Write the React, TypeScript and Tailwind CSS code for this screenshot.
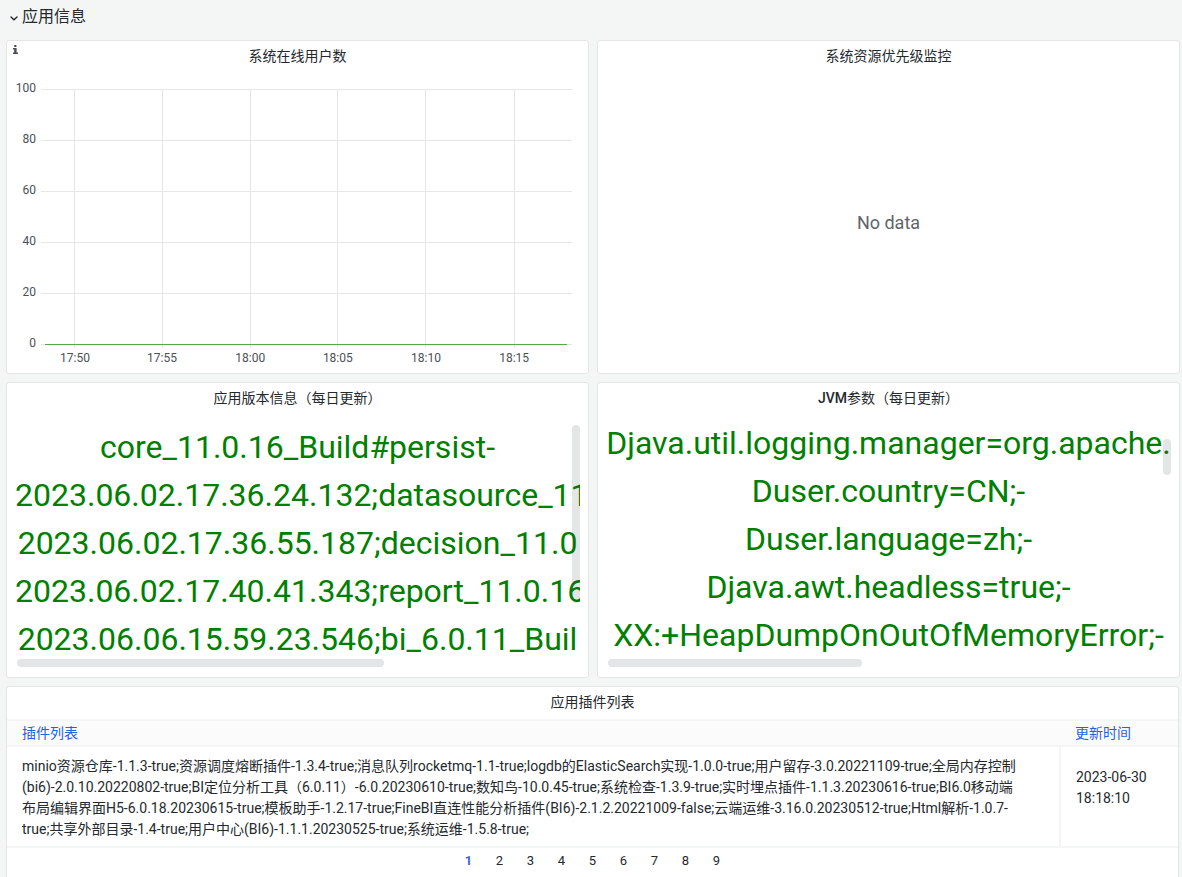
import type { ReactNode } from "react";
import { clsx } from "clsx";

const yTicks = [100, 80, 60, 40, 20, 0];

const xTicks = [
  { label: "17:50", x: "6.4%" },
  { label: "17:55", x: "22.8%" },
  { label: "18:00", x: "39.4%" },
  { label: "18:05", x: "55.9%" },
  { label: "18:10", x: "72.5%" },
  { label: "18:15", x: "89.1%" },
];

const versionLines = [
  "core_11.0.16_Build#persist-",
  "2023.06.02.17.36.24.132;datasource_11",
  "2023.06.02.17.36.55.187;decision_11.0",
  "2023.06.02.17.40.41.343;report_11.0.16",
  "2023.06.06.15.59.23.546;bi_6.0.11_Buil",
];

const jvmLines = [
  "Djava.util.logging.manager=org.apache.",
  "Duser.country=CN;-",
  "Duser.language=zh;-",
  "Djava.awt.headless=true;-",
  "XX:+HeapDumpOnOutOfMemoryError;-",
];

const pluginLines = [
  "minio资源仓库-1.1.3-true;资源调度熔断插件-1.3.4-true;消息队列rocketmq-1.1-true;logdb的ElasticSearch实现-1.0.0-true;用户留存-3.0.20221109-true;全局内存控制",
  "(bi6)-2.0.10.20220802-true;BI定位分析工具（6.0.11）-6.0.20230610-true;数知鸟-10.0.45-true;系统检查-1.3.9-true;实时埋点插件-1.1.3.20230616-true;BI6.0移动端",
  "布局编辑界面H5-6.0.18.20230615-true;模板助手-1.2.17-true;FineBI直连性能分析插件(BI6)-2.1.2.20221009-false;云端运维-3.16.0.20230512-true;Html解析-1.0.7-",
  "true;共享外部目录-1.4-true;用户中心(BI6)-1.1.1.20230525-true;系统运维-1.5.8-true;",
];

const pages = [1, 2, 3, 4, 5, 6, 7, 8, 9];

function Panel({
  title,
  className,
  children,
}: {
  title: ReactNode;
  className?: string;
  children: ReactNode;
}) {
  return (
    <section
      className={clsx(
        "relative flex min-w-0 flex-col rounded-[3px] border border-[#e4e6e6] bg-white",
        className,
      )}
    >
      <h2 className="h-8 shrink-0 text-center text-sm leading-[30px]">
        {title}
      </h2>
      {children}
    </section>
  );
}

function OnlineUsersChart() {
  return (
    <div className="flex-1 pt-4 pr-4 pl-[34px]">
      <svg
        className="h-[284px] w-full overflow-visible text-xs"
        fill="#4b5056"
        role="img"
        aria-label="系统在线用户数"
      >
        <g stroke="#e6e6e7" strokeWidth="1" shapeRendering="crispEdges">
          {yTicks.map((tick, i) => (
            <line key={tick} x1="0" x2="100%" y1={i * 51 + 0.5} y2={i * 51 + 0.5} />
          ))}
          {xTicks.map((tick) => (
            <line key={tick.label} x1={tick.x} x2={tick.x} y1="0" y2="259" />
          ))}
        </g>
        <line
          x1="0.8%"
          x2="99%"
          y1="255.5"
          y2="255.5"
          stroke="#56a64b"
          shapeRendering="crispEdges"
        />
        {yTicks.map((tick, i) => (
          <text key={tick} x="-5" y={i * 51 + 3} textAnchor="end">
            {tick}
          </text>
        ))}
        {xTicks.map((tick) => (
          <text key={tick.label} x={tick.x} y="273" textAnchor="middle">
            {tick.label}
          </text>
        ))}
      </svg>
    </div>
  );
}

function StatText({
  lines,
  className,
  children,
}: {
  lines: string[];
  className?: string;
  children: ReactNode;
}) {
  return (
    <div
      className={clsx(
        "relative mx-2 h-[252px] overflow-hidden text-center text-[32px] leading-[48px] text-[#008000]",
        className,
      )}
    >
      {lines.map((line) => (
        <p key={line} className="whitespace-nowrap">
          {line}
        </p>
      ))}
      {children}
    </div>
  );
}

function Thumb({ className }: { className: string }) {
  return (
    <div
      aria-hidden
      className={clsx("absolute rounded bg-[#24292e]/12", className)}
    />
  );
}

export default function App() {
  return (
    <main className="flex min-h-screen flex-col bg-[#f4f5f5] pr-[2px] pl-[6px] font-[Roboto,'Noto_Sans_CJK_SC',sans-serif] text-[#24292e]">
      <button
        type="button"
        aria-expanded="true"
        className="flex h-10 items-center self-start pb-1.5 pl-1 text-base leading-6"
      >
        <svg width="8" height="8" viewBox="0 0 8 8" fill="none" className="mt-1 mr-1">
          <path
            d="M1 2 4 4.8 7 2"
            stroke="currentColor"
            strokeWidth="1.4"
            strokeLinecap="round"
          />
        </svg>
        应用信息
      </button>

      <div className="grid grid-cols-2 gap-2">
        <Panel title="系统在线用户数" className="h-[334px]">
          <svg
            width="5"
            height="9"
            viewBox="0 0 5 9"
            fill="#4b4f54"
            className="absolute top-1 left-[6px]"
          >
            <path d="M1.2 0h2.2v2H1.2zM0 3h3.6v4.4H5V9H0V7.4h1.2V4.6H0z" />
          </svg>
          <OnlineUsersChart />
        </Panel>

        <Panel title="系统资源优先级监控" className="h-[334px]">
          <div className="flex flex-1 items-center justify-center text-lg text-[#5f6469]">
            No data
          </div>
        </Panel>

        <Panel title="应用版本信息（每日更新）" className="h-[296px]">
          <StatText lines={versionLines} className="pt-2">
            <Thumb className="top-[10px] right-0 h-[178px] w-2" />
            <Thumb className="bottom-0 left-[2px] h-2 w-[65%]" />
          </StatText>
        </Panel>

        <Panel
          title={
            <>
              <span className="font-medium">JVM</span>参数（每日更新）
            </>
          }
          className="h-[296px]"
        >
          <StatText lines={jvmLines} className="pt-1">
            <Thumb className="top-6 right-0 h-9 w-2" />
            <Thumb className="bottom-0 left-[2px] h-2 w-[45%]" />
          </StatText>
        </Panel>
      </div>

      <Panel
        title="应用插件列表"
        className="mt-2 mr-px flex-1 rounded-b-none border-b-0"
      >
        <table className="w-full border-collapse text-left text-sm leading-[21px]">
          <thead className="border-y-2 border-[#f4f5f5] bg-[#fbfbfb] text-[#1f62e0]">
            <tr>
              <th className="h-[26px] px-[15px] font-normal">插件列表</th>
              <th className="w-[118px] px-[15px] font-normal">更新时间</th>
            </tr>
          </thead>
          <tbody>
            <tr className="border-b-2 border-[#f4f5f5]">
              <td className="border-r-2 border-[#f4f5f5] px-[15px] pt-[9px] pb-[6px]">
                {pluginLines.map((line) => (
                  <span key={line} className="block">
                    {line}
                  </span>
                ))}
              </td>
              <td className="px-[15px] pt-5 align-top">2023-06-30 18:18:10</td>
            </tr>
          </tbody>
        </table>
        <nav aria-label="分页" className="flex justify-center text-[13px]">
          {pages.map((page) => (
            <button
              key={page}
              type="button"
              aria-current={page === 1 ? "page" : undefined}
              className={clsx(
                "h-[26px] w-[31px]",
                page === 1 && "font-bold text-[#3865e0]",
              )}
            >
              {page}
            </button>
          ))}
        </nav>
      </Panel>
    </main>
  );
}
